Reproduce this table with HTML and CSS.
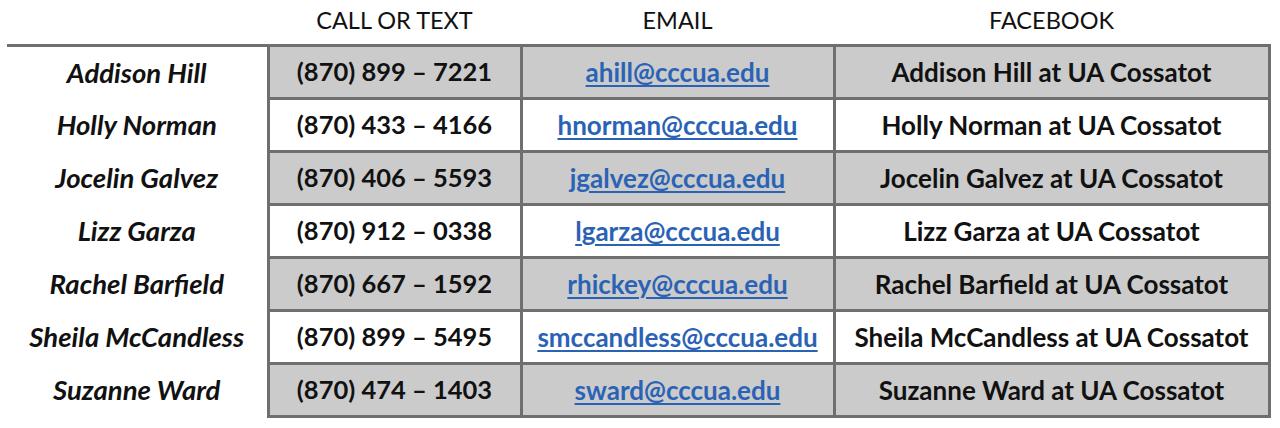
FILE: index.html
```html
<!DOCTYPE html>
<html lang="en">
<head>
<meta charset="utf-8">
<title>Contacts</title>
<link rel="stylesheet" href="styles.css">
</head>
<body>
<table class="contacts">
  <colgroup>
    <col class="c-name"><col class="c-phone"><col class="c-email"><col class="c-fb">
  </colgroup>
  <thead>
    <tr>
      <th></th>
      <th>CALL OR TEXT</th>
      <th>EMAIL</th>
      <th>FACEBOOK</th>
    </tr>
  </thead>
  <tbody>
    <tr class="shade">
      <td class="name">Addison Hill</td>
      <td class="phone">(870) 899 – 7221</td>
      <td><a href="#">ahill@cccua.edu</a></td>
      <td>Addison Hill at UA Cossatot</td>
    </tr>
    <tr>
      <td class="name">Holly Norman</td>
      <td class="phone">(870) 433 – 4166</td>
      <td><a href="#">hnorman@cccua.edu</a></td>
      <td>Holly Norman at UA Cossatot</td>
    </tr>
    <tr class="shade">
      <td class="name">Jocelin Galvez</td>
      <td class="phone">(870) 406 – 5593</td>
      <td><a href="#">jgalvez@cccua.edu</a></td>
      <td>Jocelin Galvez at UA Cossatot</td>
    </tr>
    <tr>
      <td class="name">Lizz Garza</td>
      <td class="phone">(870) 912 – 0338</td>
      <td><a href="#">lgarza@cccua.edu</a></td>
      <td>Lizz Garza at UA Cossatot</td>
    </tr>
    <tr class="shade">
      <td class="name">Rachel Barfield</td>
      <td class="phone">(870) 667 – 1592</td>
      <td><a href="#">rhickey@cccua.edu</a></td>
      <td>Rachel Barfield at UA Cossatot</td>
    </tr>
    <tr>
      <td class="name">Sheila McCandless</td>
      <td class="phone">(870) 899 – 5495</td>
      <td><a href="#">smccandless@cccua.edu</a></td>
      <td>Sheila McCandless at UA Cossatot</td>
    </tr>
    <tr class="shade">
      <td class="name">Suzanne Ward</td>
      <td class="phone">(870) 474 – 1403</td>
      <td><a href="#">sward@cccua.edu</a></td>
      <td>Suzanne Ward at UA Cossatot</td>
    </tr>
  </tbody>
</table>
</body>
</html>
```

FILE: styles.css
```css
html, body {
  margin: 0;
  padding: 0;
  background: #ffffff;
}

body {
  padding-left: 7px;
  font-family: Lato, "Open Sans", sans-serif;
  color: #111111;
}

.contacts {
  border-collapse: collapse;
  table-layout: fixed;
  width: 1262px;
}

.c-name { width: 261px; }
.c-phone { width: 253px; }
.c-email { width: 313px; }
.c-fb { width: 435px; }

.contacts th {
  height: 44px;
  padding: 0;
  font-size: 23.5px;
  font-weight: 400;
  line-height: 40px;
  text-align: center;
  vertical-align: top;
  border-bottom: 3px solid #6f6f6f;
}

.contacts td {
  height: 50px;
  padding: 0;
  font-size: 26px;
  font-weight: 700;
  line-height: 1;
  text-align: center;
  vertical-align: middle;
  white-space: nowrap;
  border: 3px solid #6f6f6f;
}

.contacts td.phone {
  font-size: 25.5px;
}

.contacts td.name {
  border: none;
  font-size: 27.5px;
  font-style: italic;
  background: #ffffff;
}

.contacts tr.shade td {
  background: #cbcbcb;
}

.contacts tr.shade td.name {
  background: #ffffff;
}

.contacts a {
  color: #2a63b5;
  text-decoration: underline;
  text-decoration-thickness: 2px;
  text-underline-offset: 3px;
}
```
